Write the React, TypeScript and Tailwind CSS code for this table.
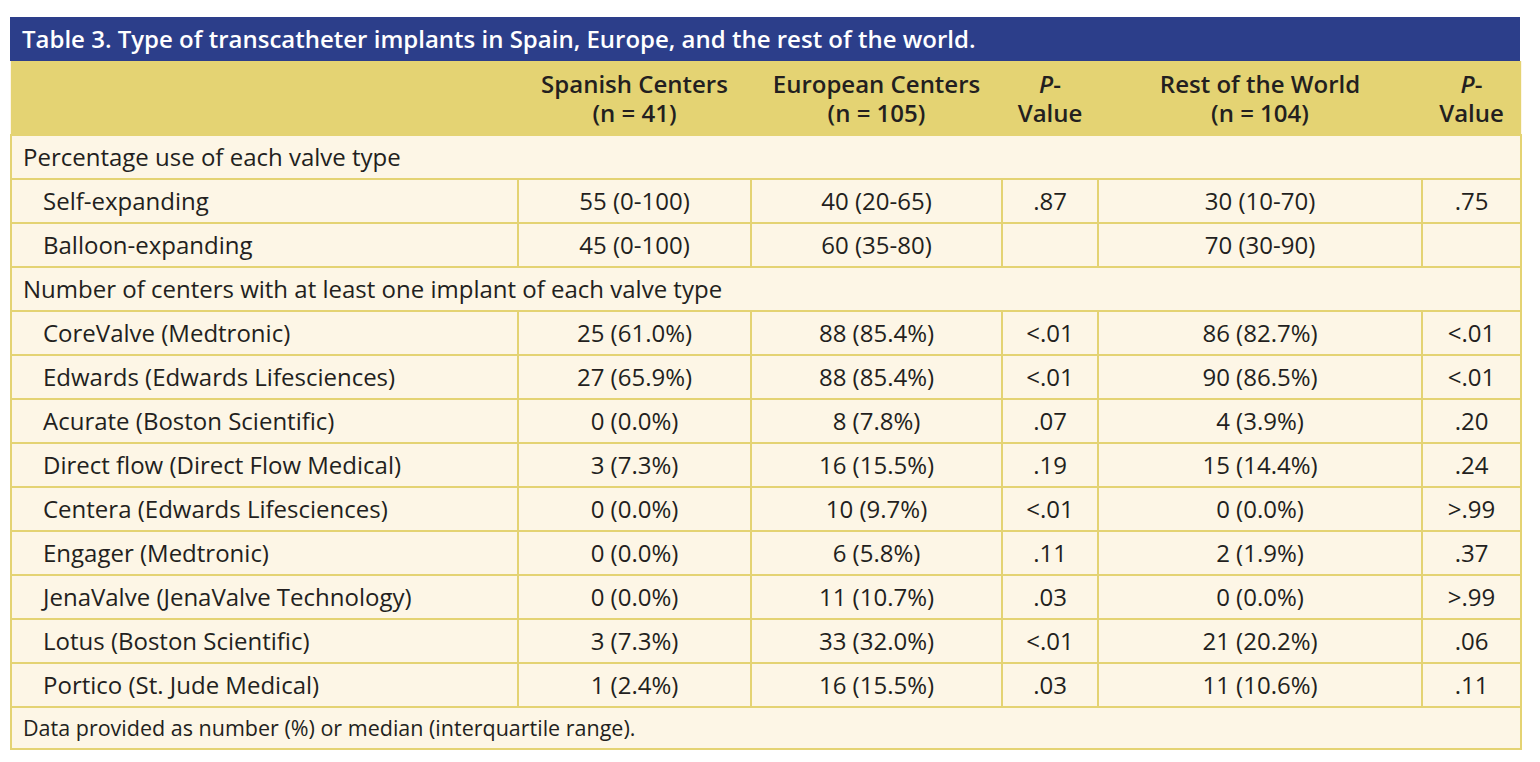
const rows: [string, string, string, string, string, string][] = [
  ['CoreValve (Medtronic)', '25 (61.0%)', '88 (85.4%)', '<.01', '86 (82.7%)', '<.01'],
  ['Edwards (Edwards Lifesciences)', '27 (65.9%)', '88 (85.4%)', '<.01', '90 (86.5%)', '<.01'],
  ['Acurate (Boston Scientific)', '0 (0.0%)', '8 (7.8%)', '.07', '4 (3.9%)', '.20'],
  ['Direct flow (Direct Flow Medical)', '3 (7.3%)', '16 (15.5%)', '.19', '15 (14.4%)', '.24'],
  ['Centera (Edwards Lifesciences)', '0 (0.0%)', '10 (9.7%)', '<.01', '0 (0.0%)', '>.99'],
  ['Engager (Medtronic)', '0 (0.0%)', '6 (5.8%)', '.11', '2 (1.9%)', '.37'],
  ['JenaValve (JenaValve Technology)', '0 (0.0%)', '11 (10.7%)', '.03', '0 (0.0%)', '>.99'],
  ['Lotus (Boston Scientific)', '3 (7.3%)', '33 (32.0%)', '<.01', '21 (20.2%)', '.06'],
  ['Portico (St. Jude Medical)', '1 (2.4%)', '16 (15.5%)', '.03', '11 (10.6%)', '.11'],
];

const cell = 'border-2 border-[#e4d373] text-center h-[44px] p-0';

function DataRow({ r }: { r: [string, string, string, string, string, string] }) {
  return (
    <tr>
      <td className="border-2 border-[#e4d373] h-[44px] pl-[31px] text-left">{r[0]}</td>
      {r.slice(1).map((v, i) => (
        <td key={i} className={cell}>{v}</td>
      ))}
    </tr>
  );
}

function GroupRow({ label }: { label: string }) {
  return (
    <tr>
      <td colSpan={6} className="border-2 border-[#e4d373] h-[44px] pl-[11px] text-left">{label}</td>
    </tr>
  );
}

// two-line header cell; each line is its own fixed-height block
function HeadCell({ top, bottom }: { top: React.ReactNode; bottom: string }) {
  return (
    <th className="font-semibold align-middle">
      <div className="h-[29px] leading-[29px] overflow-visible">{top}</div>
      <div className="h-[29px] leading-[29px] overflow-visible">{bottom}</div>
    </th>
  );
}

export default function App() {
  return (
    <div className="w-[1540px] h-[762px] bg-white pt-[17px] pl-[10px] font-['Open_Sans',sans-serif] text-[#231f20]">
      <div className="w-[1510px]">
        <div className="bg-[#2c3e8a] h-[44px] flex items-center pl-[12px] text-white text-[24px] font-semibold">
          Table 3. Type of transcatheter implants in Spain, Europe, and the rest of the world.
        </div>
        <table className="w-[1510px] border-collapse table-fixed text-[24px] leading-none bg-[#fdf6e6]">
          <colgroup>
            <col className="w-[507px]" />
            <col className="w-[233px]" />
            <col className="w-[251px]" />
            <col className="w-[96px]" />
            <col className="w-[324px]" />
            <col className="w-[99px]" />
          </colgroup>
          <thead>
            <tr className="bg-[#e4d373] h-[74px]">
              <th />
              <HeadCell top="Spanish Centers" bottom="(n = 41)" />
              <HeadCell top="European Centers" bottom="(n = 105)" />
              <HeadCell top={<><i>P</i>-</>} bottom="Value" />
              <HeadCell top="Rest of the World" bottom="(n = 104)" />
              <HeadCell top={<><i>P</i>-</>} bottom="Value" />
            </tr>
          </thead>
          <tbody>
            <GroupRow label="Percentage use of each valve type" />
            <DataRow r={['Self-expanding', '55 (0-100)', '40 (20-65)', '.87', '30 (10-70)', '.75']} />
            <DataRow r={['Balloon-expanding', '45 (0-100)', '60 (35-80)', '', '70 (30-90)', '']} />
            <GroupRow label="Number of centers with at least one implant of each valve type" />
            {rows.map((r) => (
              <DataRow key={r[0]} r={r} />
            ))}
            <tr>
              <td colSpan={6} className="border-2 border-[#e4d373] h-[42px] pl-[11px] text-left text-[21.5px]">
                Data provided as number (%) or median (interquartile range).
              </td>
            </tr>
          </tbody>
        </table>
      </div>
    </div>
  );
}
